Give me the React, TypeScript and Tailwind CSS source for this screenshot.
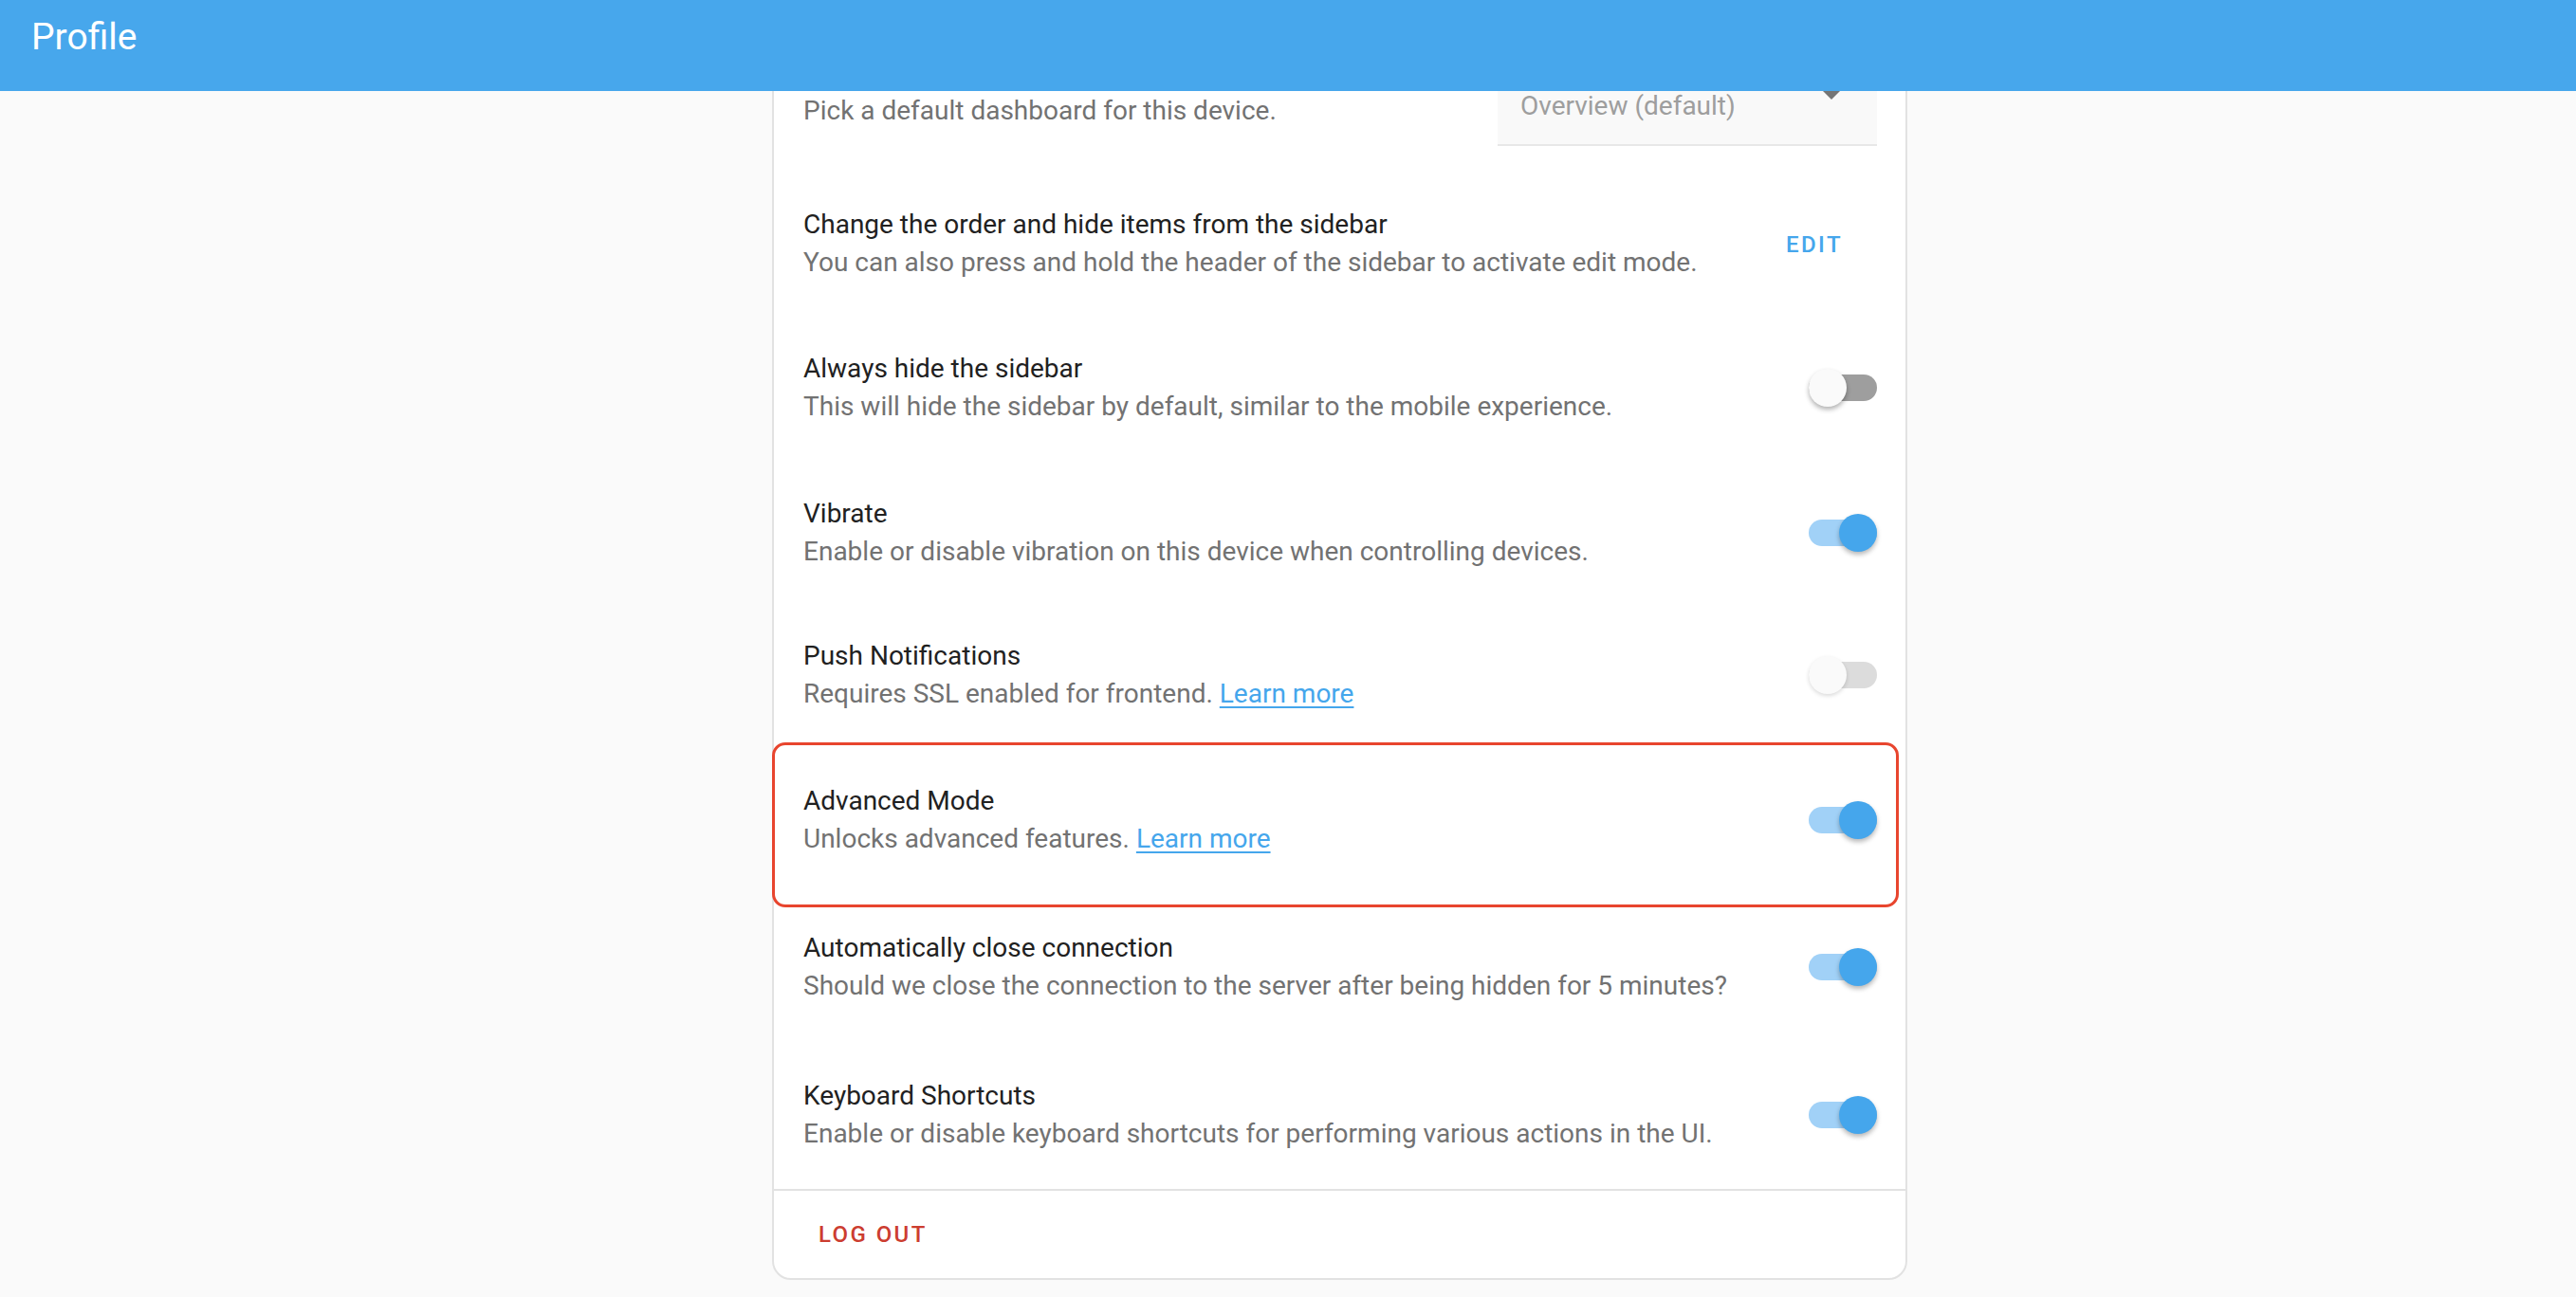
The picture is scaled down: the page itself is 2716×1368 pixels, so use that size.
import React from "react";

function Toggle({ on, disabled }: { on: boolean; disabled?: boolean }) {
  const track = on ? "bg-[#a1d1f7]" : disabled ? "bg-[#dcdcdc]" : "bg-[#9e9e9e]";
  const knob = on
    ? "right-0 bg-[#45a6ec] shadow-[0_3px_5px_rgba(0,0,0,0.28)]"
    : disabled
    ? "left-0 bg-[#fafafa] shadow-[0_2px_4px_rgba(0,0,0,0.14)]"
    : "left-0 bg-[#fafafa] shadow-[0_3px_5px_rgba(0,0,0,0.3)]";
  return (
    <div className="relative flex h-[40px] w-[72px] shrink-0 items-center">
      <div className={`h-[28px] w-full rounded-full ${track}`} />
      <div className={`absolute top-0 h-[40px] w-[40px] rounded-full ${knob}`} />
    </div>
  );
}

function Row({
  h,
  title,
  desc,
  right,
}: {
  h: string;
  title: string;
  desc: React.ReactNode;
  right: React.ReactNode;
}) {
  return (
    <div className={`flex items-center pl-[31px] pr-[30px] ${h}`}>
      <div className="flex flex-1 flex-col">
        <div className="text-[28px] leading-[40px] text-[#212121]">{title}</div>
        <div className="text-[28px] leading-[40px] text-[#727272]">{desc}</div>
      </div>
      {right}
    </div>
  );
}

function Learn() {
  return (
    <span className="text-[#45a6ec] underline decoration-[2px] underline-offset-[4px]">Learn more</span>
  );
}

export default function App() {
  return (
    <div className="flex h-[1368px] w-[2716px] flex-col overflow-hidden bg-[#fafafa] font-[Roboto,sans-serif]">
      <header className="relative z-10 flex h-[96px] shrink-0 items-start bg-[#47a7ec] pl-[33px] pt-[20px]">
        <h1 className="text-[39px] font-normal leading-none text-white">Profile</h1>
      </header>
      <main className="flex-1 overflow-hidden">
        <div className="-mt-[90px] ml-[814px] w-[1197px] rounded-[20px] border-2 border-[#e2e2e2] bg-white">
          {/* Dashboard row (scrolled partly under header) */}
          <div className="flex h-[175px] items-start pl-[31px] pr-[30px]">
            <div className="flex flex-1 flex-col pt-[89px]">
              <div className="text-[28px] leading-[40px] text-[#727272]">Pick a default dashboard for this device.</div>
            </div>
            <div className="relative mt-[48px] box-border h-[98px] w-[400px] border-b-2 border-[#e8e8e8] bg-[#f9f9f9] pl-[24px] pt-[36px]">
              <div className="text-[28px] leading-[40px] text-[#9e9e9e]">Overview (default)</div>
              <svg className="absolute right-[39px] top-[40px]" width="18" height="9" viewBox="0 0 18 9">
                <path d="M0 0 L18 0 L9 9 Z" fill="#757575" />
              </svg>
            </div>
          </div>
          <Row
            h="h-[148px]"
            title="Change the order and hide items from the sidebar"
            desc="You can also press and hold the header of the sidebar to activate edit mode."
            right={
              <span className="mr-[36px] mt-[2px] text-[24px] font-medium tracking-[2.4px] text-[#45a6ec]">EDIT</span>
            }
          />
          <Row
            h="h-[156px]"
            title="Always hide the sidebar"
            desc="This will hide the sidebar by default, similar to the mobile experience."
            right={<Toggle on={false} />}
          />
          <Row
            h="h-[150px]"
            title="Vibrate"
            desc="Enable or disable vibration on this device when controlling devices."
            right={<Toggle on />}
          />
          <Row
            h="h-[150px]"
            title="Push Notifications"
            desc={
              <>
                Requires SSL enabled for frontend. <Learn />
              </>
            }
            right={<Toggle on={false} disabled />}
          />
          <div className="relative">
            <Row
              h="h-[155px]"
              title="Advanced Mode"
              desc={
                <>
                  Unlocks advanced features. <Learn />
                </>
              }
              right={<Toggle on />}
            />
            <div className="pointer-events-none absolute -bottom-[15px] -left-[2px] -top-[4px] right-[7px] rounded-[14px] border-[3px] border-[#e8452e]" />
          </div>
          <Row
            h="h-[156px]"
            title="Automatically close connection"
            desc="Should we close the connection to the server after being hidden for 5 minutes?"
            right={<Toggle on />}
          />
          <Row
            h="h-[156px]"
            title="Keyboard Shortcuts"
            desc="Enable or disable keyboard shortcuts for performing various actions in the UI."
            right={<Toggle on />}
          />
          <div className="flex h-[94px] items-center border-t-2 border-[#e2e2e2] pl-[47px]">
            <span className="text-[24px] font-medium tracking-[2.4px] text-[#cc3d30]">LOG OUT</span>
          </div>
        </div>
      </main>
    </div>
  );
}
